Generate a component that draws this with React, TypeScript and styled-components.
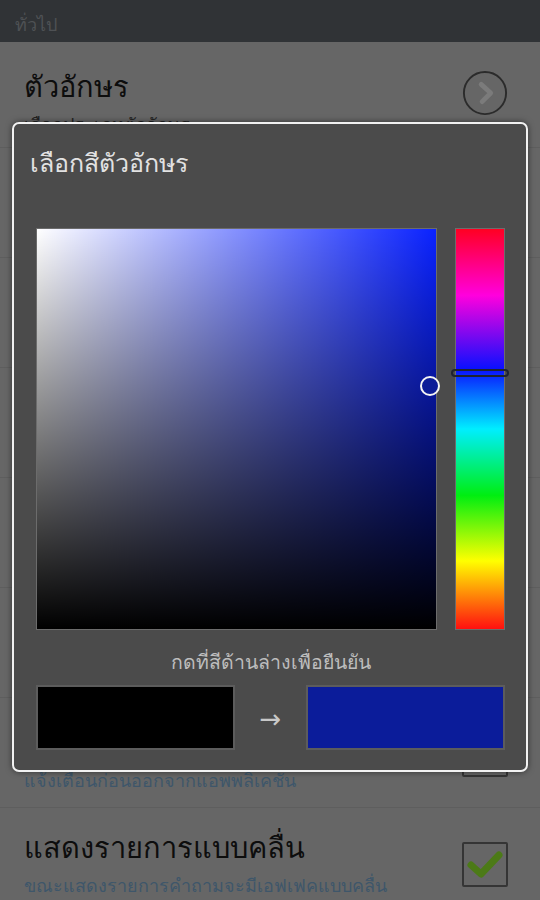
import React from "react";
import styled, { createGlobalStyle } from "styled-components";

const Global = createGlobalStyle`
  html, body { margin: 0; padding: 0; background: #666666; }
  body { font-family: "Noto Sans", "DejaVu Sans", sans-serif; }
  * { box-sizing: border-box; }
`;

const Page = styled.div`
  position: relative;
  width: 540px;
  height: 900px;
  overflow: hidden;
  background: #666666;
`;

const TopBar = styled.div`
  height: 42px;
  display: flex;
  align-items: center;
  padding: 6px 0 0 15px;
  background: #303336;
  color: #4e5154;
  font-size: 18px;
`;

const Row = styled.div<{ $h: number; $top?: number; $divider?: boolean }>`
  height: ${(p) => p.$h}px;
  display: flex;
  align-items: flex-start;
  justify-content: space-between;
  padding: ${(p) => p.$top ?? 24}px 32px 0 24px;
  border-bottom: ${(p) => (p.$divider ? "1px solid #5e5e5e" : "none")};
`;

const RowText = styled.div`
  display: flex;
  flex-direction: column;
`;

const RowTitle = styled.div`
  font-size: 29px;
  line-height: 40px;
  color: #0d0d0d;
`;

const RowSub = styled.div<{ $dark?: boolean }>`
  font-size: 18px;
  line-height: 30px;
  margin-top: 3px;
  color: ${(p) => (p.$dark ? "#222" : "#3e566a")};
`;

const Control = styled.div<{ $top: number }>`
  margin-top: ${(p) => p.$top}px;
  width: 46px;
  height: 46px;
  display: flex;
  align-items: center;
  justify-content: center;
`;

const CheckBox = styled.div`
  width: 46px;
  height: 45px;
  border: 2px solid #353535;
  border-radius: 2px;
  display: flex;
  align-items: center;
  justify-content: center;
`;

const Dialog = styled.div`
  position: absolute;
  left: 12px;
  top: 122px;
  width: 516px;
  height: 650px;
  background: #4b4b4b;
  border: 2px solid #f2f2f2;
  border-radius: 7px;
  box-shadow: 0 0 6px rgba(0, 0, 0, 0.5);
  display: flex;
  flex-direction: column;
  padding: 0 21px 20px 22px;
`;

const DialogTitle = styled.div`
  height: 104px;
  padding-top: 22px;
  margin-left: -6px;
  font-size: 25px;
  line-height: 32px;
  color: #e2e2e2;
`;

const Picker = styled.div`
  display: flex;
  gap: 18px;
  height: 402px;
`;

const SVBox = styled.div<{ $hue: string }>`
  position: relative;
  width: 401px;
  height: 402px;
  border: 1px solid #6c6c6c;
  background:
    linear-gradient(to bottom, rgba(0, 0, 0, 0), #000),
    linear-gradient(to right, #fff, rgba(255, 255, 255, 0)),
    ${(p) => p.$hue};
`;

const SVMarker = styled.div`
  position: absolute;
  width: 20px;
  height: 20px;
  margin: -10px 0 0 -10px;
  border-radius: 50%;
  border: 2.5px solid #f4f4f4;
  background: #0c1c98;
`;

const HueBar = styled.div`
  position: relative;
  width: 50px;
  height: 402px;
  border: 1px solid #6c6c6c;
  background: linear-gradient(
    to bottom,
    #ff0022 0%,
    #ff00dd 16.6%,
    #0a10ff 35%,
    #00eeff 50%,
    #00ee11 66.6%,
    #ffff00 83%,
    #ff1010 100%
  );
`;

const HueMarker = styled.div`
  position: absolute;
  left: -5px;
  right: -5px;
  height: 8px;
  margin-top: -4px;
  border: 2px solid #1f2330;
  border-radius: 4px;
`;

const Hint = styled.div`
  margin-top: 20px;
  text-align: center;
  font-size: 19.5px;
  line-height: 24px;
  color: #bdbdbd;
`;

const SwatchRow = styled.div`
  margin-top: 11px;
  display: flex;
  align-items: center;
  height: 65px;
`;

const Swatch = styled.div<{ $c: string }>`
  width: 199px;
  height: 65px;
  background: ${(p) => p.$c};
  border: 2px solid #5c5c5c;
`;

const Arrow = styled.div`
  flex: 1;
  text-align: center;
  font-size: 26px;
  color: #c8c8c8;
  font-family: "DejaVu Sans", sans-serif;
  padding-top: 2px;
`;

const CircleArrow = () => (
  <svg width="48" height="48" viewBox="0 0 48 48">
    <circle cx="24" cy="24" r="22" fill="none" stroke="#2b2b2b" strokeWidth="2" />
    <path d="M20 15 L30 24 L21 33" fill="none" stroke="#7b7b7b" strokeWidth="5" strokeLinecap="round" strokeLinejoin="round" />
  </svg>
);

const Check = () => (
  <svg width="40" height="36" viewBox="0 0 40 36">
    <path d="M6 19 L16 28 L34 9" fill="none" stroke="#4c7a17" strokeWidth="7" strokeLinecap="round" strokeLinejoin="round" />
  </svg>
);

export default function App() {
  const sv = { x: 393, y: 157 };
  const hueY = 144;
  return (
    <Page>
      <Global />
      <TopBar>ทั่วไป</TopBar>
      <Row $h={106} $divider>
        <RowText>
          <RowTitle>ตัวอักษร</RowTitle>
          <RowSub $dark>เลือกประเภทตัวอักษร</RowSub>
        </RowText>
        <Control $top={4}>
          <CircleArrow />
        </Control>
      </Row>
      <Row $h={110} $divider>
        <RowText>
          <RowTitle>ขนาดตัวอักษร</RowTitle>
          <RowSub>ปรับขนาดตัวอักษร</RowSub>
        </RowText>
      </Row>
      <Row $h={110} $divider>
        <RowText>
          <RowTitle>สีตัวอักษร</RowTitle>
          <RowSub>เลือกสีตัวอักษร</RowSub>
        </RowText>
      </Row>
      <Row $h={110} $divider>
        <RowText>
          <RowTitle>สีพื้นหลัง</RowTitle>
          <RowSub>เลือกสีพื้นหลัง</RowSub>
        </RowText>
      </Row>
      <Row $h={110} $divider>
        <RowText>
          <RowTitle>เสียง</RowTitle>
          <RowSub>เปิดเสียงเมื่อตอบคำถาม</RowSub>
        </RowText>
      </Row>
      <Row $h={110} $divider>
        <RowText>
          <RowTitle>สั่น</RowTitle>
          <RowSub>สั่นเมื่อตอบคำถามผิด</RowSub>
        </RowText>
      </Row>
      <Row $h={110} $divider>
        <RowText>
          <RowTitle>ยืนยันการออก</RowTitle>
          <RowSub>แจ้งเตือนก่อนออกจากแอพพลิเคชั่น</RowSub>
        </RowText>
        <Control $top={9}>
          <CheckBox />
        </Control>
      </Row>
      <Row $h={110} $top={19}>
        <RowText>
          <RowTitle>แสดงรายการแบบคลื่น</RowTitle>
          <RowSub>ขณะแสดงรายการคำถามจะมีเอฟเฟคแบบคลื่น</RowSub>
        </RowText>
        <Control $top={14}>
          <CheckBox>
            <Check />
          </CheckBox>
        </Control>
      </Row>

      <Dialog>
        <DialogTitle>เลือกสีตัวอักษร</DialogTitle>
        <Picker>
          <SVBox $hue="#0a22ff">
            <SVMarker style={{ left: sv.x, top: sv.y }} />
          </SVBox>
          <HueBar>
            <HueMarker style={{ top: hueY }} />
          </HueBar>
        </Picker>
        <Hint>กดที่สีด้านล่างเพื่อยืนยัน</Hint>
        <SwatchRow>
          <Swatch $c="#000000" />
          <Arrow>→</Arrow>
          <Swatch $c="#0b1c9a" />
        </SwatchRow>
      </Dialog>
    </Page>
  );
}
